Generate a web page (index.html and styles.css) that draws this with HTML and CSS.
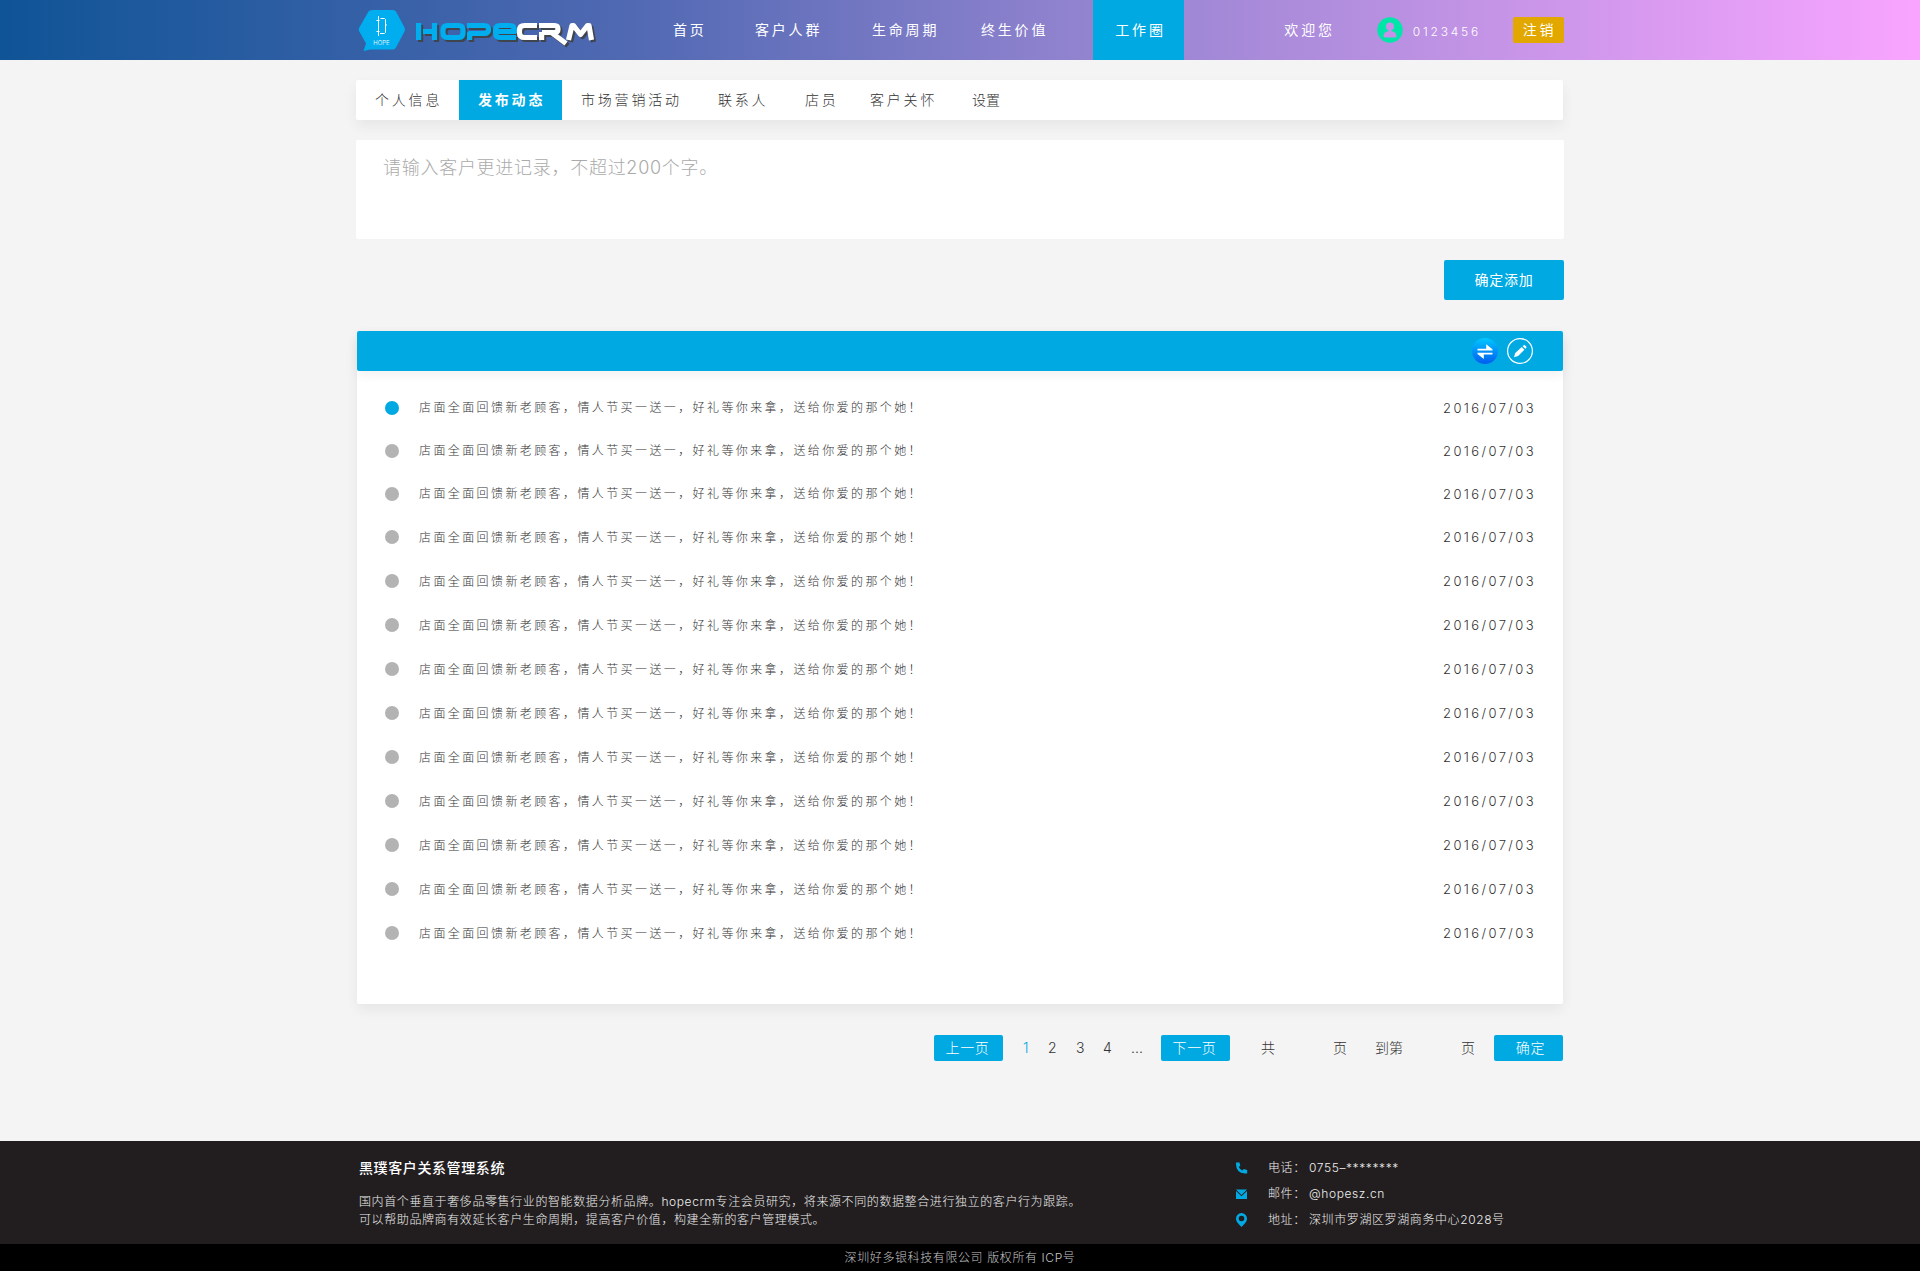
FILE: index.html
```html
<!DOCTYPE html>
<html lang="zh-CN">
<head>
<meta charset="utf-8">
<title>HOPECRM - 发布动态</title>
<link rel="stylesheet" href="styles.css">
</head>
<body>
<header class="topbar">
  <div class="wrap topbar-inner">
    <a class="logo" href="#" aria-label="HOPECRM">
      <svg class="logo-badge" width="48" height="42" viewBox="0 0 48 42" aria-hidden="true">
        <path d="M14 1h21q2 0 3 1.500l8.500 16q1 2 0 4l-8.500 16q-1 2-3 2H12l-6.500 1.500L8 34.500 1.300 22.500q-1-2 0-4L10.500 2.500Q11.500 1 14 1Z" fill="#00adef"/>
        <path d="M20.500 7v20M18.500 22.500h3M18.500 11.500h3M22.500 9.500h4l1 1v5.500h1.500M27.500 16v7.500l-1 1h-4.500" fill="none" stroke="#fff" stroke-width="1"/>
        <text class="logo-caption" x="23.500" y="36" text-anchor="middle">HOPE</text>
      </svg>
      <svg class="logo-word" width="184" height="36" viewBox="0 0 184 36" aria-hidden="true">
        <defs>
          <g id="word" fill="none" stroke-width="5.200" stroke-linejoin="round">
            <g class="word-hope">
              <path d="M4.600 11v17M9 19.500h11M20.500 11v17"/>
              <path d="M33.500 13.500h11q4.500 0 4.500 4.500v3q0 4.500-4.500 4.500h-11Q29 25.500 29 21v-3q0-4.500 4.500-4.500Z"/>
              <path d="M55.600 28v-6.500h14.500q4.500 0 4.500-4t-4.500-4H53"/>
              <path d="M84 19.500h16.500V18q0-4.500-4.500-4.500H86q-4.500 0-4.500 4.500v3q0 4.500 4.500 4.500h16"/>
            </g>
            <g class="word-crm">
              <path d="M123 13.500h-12.500q-5 0-5 4.500v3q0 4.500 5 4.500H123"/>
              <path d="M125 13.500h15.500q3.500 0 3.500 3.500t-3.500 3.500H128M127.600 20v8M138 21l14 10.500"/>
              <path d="M154.500 28l3.500-14.500h1.500l7 9 7-9h1.500l2.500 14.500"/>
            </g>
          </g>
        </defs>
        <use href="#word" class="word-shadow" x="2" y="2"/>
        <use href="#word" class="word-face"/>
      </svg>
    </a>
    <nav class="mainnav">
      <a href="#">首页</a>
      <a href="#">客户人群</a>
      <a href="#">生命周期</a>
      <a href="#">终生价值</a>
      <a class="is-active" href="#">工作圈</a>
    </nav>
    <div class="account">
      <span class="welcome">欢迎您</span>
      <svg class="avatar" width="26" height="26" viewBox="0 0 26 26" aria-hidden="true">
        <circle cx="13" cy="13" r="12.700" fill="#00e5a8"/>
        <circle cx="13" cy="9.500" r="4" fill="#c493e8"/>
        <path d="M6.500 19.500q0-5 5-5.300l.2-2h2.600l.2 2q5 .3 5 5.300 0 1-1.200 1H7.700q-1.200 0-1.200-1Z" fill="#c493e8"/>
      </svg>
      <span class="user-id">0123456</span>
      <button class="logout" type="button">注销</button>
    </div>
  </div>
</header>

<main class="wrap">
  <nav class="subnav">
    <a href="#">个人信息</a>
    <a class="is-active" href="#">发布动态</a>
    <a href="#">市场营销活动</a>
    <a href="#">联系人</a>
    <a href="#">店员</a>
    <a href="#">客户关怀</a>
    <a class="tight" href="#">设置</a>
  </nav>

  <form class="composer">
    <textarea class="composer-text" aria-label="客户更进记录" maxlength="200" placeholder="请输入客户更进记录，不超过200个字。"></textarea>
    <button class="composer-submit" type="button">确定添加</button>
  </form>

  <section class="card">
    <div class="card-head">
      <button class="icon-btn" type="button" aria-label="切换">
        <svg width="26" height="26" viewBox="0 0 26 26">
          <defs><linearGradient id="swap" x1="0" y1="0" x2="0" y2="1"><stop offset="0" stop-color="#00c8ff"/><stop offset="1" stop-color="#005cf0"/></linearGradient></defs>
          <circle cx="13" cy="13" r="13" fill="url(#swap)"/>
          <path d="M5.500 10.700h8.700V6.200l6.300 5v1.300h-15ZM20.500 16.500h-8.700v4.500l-6.300-5v-1.300h15Z" fill="#fff"/>
        </svg>
      </button>
      <button class="icon-btn" type="button" aria-label="编辑">
        <svg width="26" height="26" viewBox="0 0 26 26">
          <circle cx="13" cy="13" r="12.400" fill="none" stroke="#fff" stroke-width="1.200"/>
          <path d="M7 19.200l1.200-4.200 6.600-6 2.600 2.700-6.300 6.200ZM15.700 8.200l1-.9q.6-.5 1.200 0l1.300 1.300q.6.700 0 1.300l-.9.900Z" fill="#fff"/>
        </svg>
      </button>
    </div>
    <ul class="posts">
      <li class="post is-new"><span class="dot"></span><p>店面全面回馈新老顾客，情人节买一送一，好礼等你来拿，送给你爱的那个她！</p><time>2016/07/03</time></li>
      <li class="post"><span class="dot"></span><p>店面全面回馈新老顾客，情人节买一送一，好礼等你来拿，送给你爱的那个她！</p><time>2016/07/03</time></li>
      <li class="post"><span class="dot"></span><p>店面全面回馈新老顾客，情人节买一送一，好礼等你来拿，送给你爱的那个她！</p><time>2016/07/03</time></li>
      <li class="post"><span class="dot"></span><p>店面全面回馈新老顾客，情人节买一送一，好礼等你来拿，送给你爱的那个她！</p><time>2016/07/03</time></li>
      <li class="post"><span class="dot"></span><p>店面全面回馈新老顾客，情人节买一送一，好礼等你来拿，送给你爱的那个她！</p><time>2016/07/03</time></li>
      <li class="post"><span class="dot"></span><p>店面全面回馈新老顾客，情人节买一送一，好礼等你来拿，送给你爱的那个她！</p><time>2016/07/03</time></li>
      <li class="post"><span class="dot"></span><p>店面全面回馈新老顾客，情人节买一送一，好礼等你来拿，送给你爱的那个她！</p><time>2016/07/03</time></li>
      <li class="post"><span class="dot"></span><p>店面全面回馈新老顾客，情人节买一送一，好礼等你来拿，送给你爱的那个她！</p><time>2016/07/03</time></li>
      <li class="post"><span class="dot"></span><p>店面全面回馈新老顾客，情人节买一送一，好礼等你来拿，送给你爱的那个她！</p><time>2016/07/03</time></li>
      <li class="post"><span class="dot"></span><p>店面全面回馈新老顾客，情人节买一送一，好礼等你来拿，送给你爱的那个她！</p><time>2016/07/03</time></li>
      <li class="post"><span class="dot"></span><p>店面全面回馈新老顾客，情人节买一送一，好礼等你来拿，送给你爱的那个她！</p><time>2016/07/03</time></li>
      <li class="post"><span class="dot"></span><p>店面全面回馈新老顾客，情人节买一送一，好礼等你来拿，送给你爱的那个她！</p><time>2016/07/03</time></li>
      <li class="post"><span class="dot"></span><p>店面全面回馈新老顾客，情人节买一送一，好礼等你来拿，送给你爱的那个她！</p><time>2016/07/03</time></li>
    </ul>
  </section>

  <form class="pager">
    <button class="pager-btn" type="button">上一页</button>
    <div class="pager-pages">
      <a class="is-current" href="#">1</a>
      <a href="#">2</a>
      <a href="#">3</a>
      <a href="#">4</a>
      <span>...</span>
    </div>
    <button class="pager-btn" type="button">下一页</button>
    <div class="pager-total"><span>共</span><span>页</span></div>
    <label class="pager-jump">到第<input type="text" aria-label="页码">页</label>
    <button class="pager-btn pager-go" type="button">确定</button>
  </form>
</main>

<footer class="footer">
  <div class="wrap footer-inner">
    <div class="about">
      <h2>黑璞客户关系管理系统</h2>
      <p>国内首个垂直于奢侈品零售行业的智能数据分析品牌。hopecrm专注会员研究，将来源不同的数据整合进行独立的客户行为跟踪。<br>可以帮助品牌商有效延长客户生命周期，提高客户价值，构建全新的客户管理模式。</p>
    </div>
    <ul class="contacts">
      <li>
        <svg width="12" height="14" viewBox="0 0 12 14" aria-hidden="true"><path d="M0 1.500h3.500l.8 3.200-1.500 1.300q1.200 2.400 3.500 3.600L7.700 8l3.500 1v3.500H9Q0 11.800 0 3Z" fill="#00a9e2"/></svg>
        <span>电话：</span><span>0755–********</span>
      </li>
      <li>
        <svg width="12" height="14" viewBox="0 0 12 14" aria-hidden="true"><path d="M0 2.500h11L5.500 8Z M0 4l5.500 5.300L11 4v8H0Z" fill="#00a9e2"/></svg>
        <span>邮件：</span><span>@hopesz.cn</span>
      </li>
      <li>
        <svg width="12" height="14" viewBox="0 0 12 14" aria-hidden="true"><path fill-rule="evenodd" d="M5.500 0A5.500 5.500 0 0 1 11 5.600C11 9 8 11.500 5.500 14 3 11.500 0 9 0 5.600A5.500 5.500 0 0 1 5.500 0Zm0 2.700a2.800 2.800 0 1 0 0 5.600 2.800 2.800 0 0 0 0-5.600Z" fill="#00a9e2"/></svg>
        <span>地址：</span><span>深圳市罗湖区罗湖商务中心2028号</span>
      </li>
    </ul>
  </div>
  <div class="copyright">深圳好多银科技有限公司 版权所有 ICP号</div>
</footer>
</body>
</html>
```
FILE: styles.css
```css
* { box-sizing: border-box; }

body {
  margin: 0;
  min-height: 100vh;
  display: flex;
  flex-direction: column;
  background: #f4f4f4;
  color: #333;
  font-family: Inter, "Noto Sans CJK SC", sans-serif;
  font-weight: 300;
  font-size: 14px;
  line-height: 20px;
}

a { color: inherit; text-decoration: none; }
ul { list-style: none; margin: 0; padding: 0; }
p, h2 { margin: 0; }
svg { display: block; flex: none; }
button, input, textarea {
  font: inherit;
  color: inherit;
  border: 0;
  padding: 0;
  background: none;
}
button { cursor: pointer; }

.wrap {
  width: 100%;
  max-width: 1208px;
  margin: 0 auto;
}

/* Top bar */
.topbar {
  background: linear-gradient(90deg, #0f5496 0%, #5169b3 33%, #9484d0 57%, #f9a5ff 100%);
  color: #fff;
}
.topbar-inner {
  display: flex;
  height: 60px;
}
.logo {
  display: flex;
  align-items: center;
  gap: 8px;
  width: 317px;
  padding-left: 2px;
}
.logo-caption { font-size: 6px; fill: #fff; }
.word-hope { stroke: var(--hope); }
.word-crm { stroke: var(--crm); }
.word-shadow { --hope: #40444d; --crm: #40444d; }
.word-face { --hope: #00adef; --crm: #fff; }

.mainnav {
  display: grid;
  grid-template-columns: 82px 117px 109px 112px 91px;
  letter-spacing: 0.2em;
  font-weight: 400;
  line-height: 60px;
}
.mainnav .is-active {
  background: #00a9e2;
  text-align: center;
  padding-left: 4px;
}
.account {
  display: flex;
  align-items: center;
  margin-left: auto;
  letter-spacing: 0.2em;
}
.welcome { font-weight: 400; margin-right: 42px; }
.avatar { margin-right: 10px; }
.user-id { font-size: 12px; margin-right: 32px; padding-top: 3px; }
.logout {
  width: 51px;
  height: 26px;
  padding-left: 2px;
  border-radius: 2px;
  background: #e2a800;
  font-weight: 400;
  letter-spacing: 0.2em;
}

/* Sub navigation */
.subnav {
  display: grid;
  grid-template-columns: 103px 103px 137px 87px 65px 102px 1fr;
  margin: 20px 1px 20px 0;
  border-radius: 2px;
  background: #fff;
  box-shadow: 0 6px 14px rgba(0, 0, 0, 0.06);
  line-height: 40px;
  letter-spacing: 0.2em;
}
.subnav a { padding-left: 19px; }
.subnav .is-active {
  background: #00a9e2;
  color: #fff;
  font-weight: 700;
}
.subnav .tight { letter-spacing: 0; }

/* Composer */
.composer {
  display: flex;
  flex-direction: column;
  align-items: flex-end;
  gap: 21px;
}
.composer-text {
  display: block;
  width: 100%;
  height: 99px;
  padding: 16px 27px;
  border-radius: 2px;
  background: #fff;
  font-size: 18px;
  line-height: 24px;
  letter-spacing: 0.04em;
  resize: none;
}
.composer-text::placeholder { color: #aaa; opacity: 1; }
.composer-submit {
  width: 120px;
  height: 40px;
  border-radius: 2px;
  background: #00a9e2;
  color: #fff;
  font-weight: 400;
  letter-spacing: 0.05em;
}

/* Activity list */
.card {
  margin: 31px 1px 0;
  border-radius: 2px;
  background: #fff;
  box-shadow: 0 6px 14px rgba(0, 0, 0, 0.06);
}
.card-head {
  display: flex;
  justify-content: flex-end;
  align-items: center;
  gap: 9px;
  height: 40px;
  padding-right: 30px;
  border-radius: 2px;
  background: #00a9e2;
  box-shadow: 0 4px 12px rgba(0, 0, 0, 0.06);
}
.posts { padding: 15px 27px 49px 28px; }
.post {
  display: flex;
  align-items: center;
  height: 44px;
  font-size: 12px;
  letter-spacing: 0.2em;
}
.post:nth-child(-n+3) { height: 43px; }
.dot {
  flex: none;
  width: 14px;
  height: 14px;
  margin-right: 20px;
  border-radius: 50%;
  background: #b3b3b3;
}
.is-new .dot { background: #00a9e2; }
.post p { padding-top: 1px; }
.post time { margin-left: auto; font-size: 13px; }

/* Pagination */
.pager {
  display: flex;
  justify-content: flex-end;
  align-items: center;
  margin: 31px 1px 80px;
}
.pager-btn {
  width: 69px;
  height: 26px;
  padding: 0 2px 1px 0;
  border-radius: 2px;
  background: #00a9e2;
  color: #fff;
  letter-spacing: 0.05em;
}
.pager-go { padding: 0 0 0 4px; }
.pager-pages {
  display: grid;
  grid-template-columns: 25px 28px 27px 28px 30px;
  padding-left: 20px;
}
.pager-pages .is-current { color: #00a9e2; }
.pager-total {
  display: flex;
  justify-content: space-between;
  width: 86px;
  margin: 0 28px 0 31px;
}
.pager-jump { margin-right: 19px; }
.pager-jump input { width: 58px; }

/* Footer */
.footer {
  margin-top: auto;
  background: #221e1f;
  color: #eee;
  font-size: 12px;
  line-height: 18px;
  letter-spacing: 0.05em;
}
.footer-inner {
  display: flex;
  justify-content: space-between;
  height: 103px;
  padding: 14px 0 0 3px;
}
.about h2 {
  margin-bottom: 12px;
  color: #fff;
  font-size: 14px;
  font-weight: 500;
  line-height: 26px;
}
.contacts { width: 328px; }
.contacts li {
  display: grid;
  grid-template-columns: 32px 41px 1fr;
  align-items: center;
  height: 26px;
}
.copyright {
  padding-top: 1px;
  background: #000;
  color: #c4c4c4;
  line-height: 26px;
  text-align: center;
}
```
